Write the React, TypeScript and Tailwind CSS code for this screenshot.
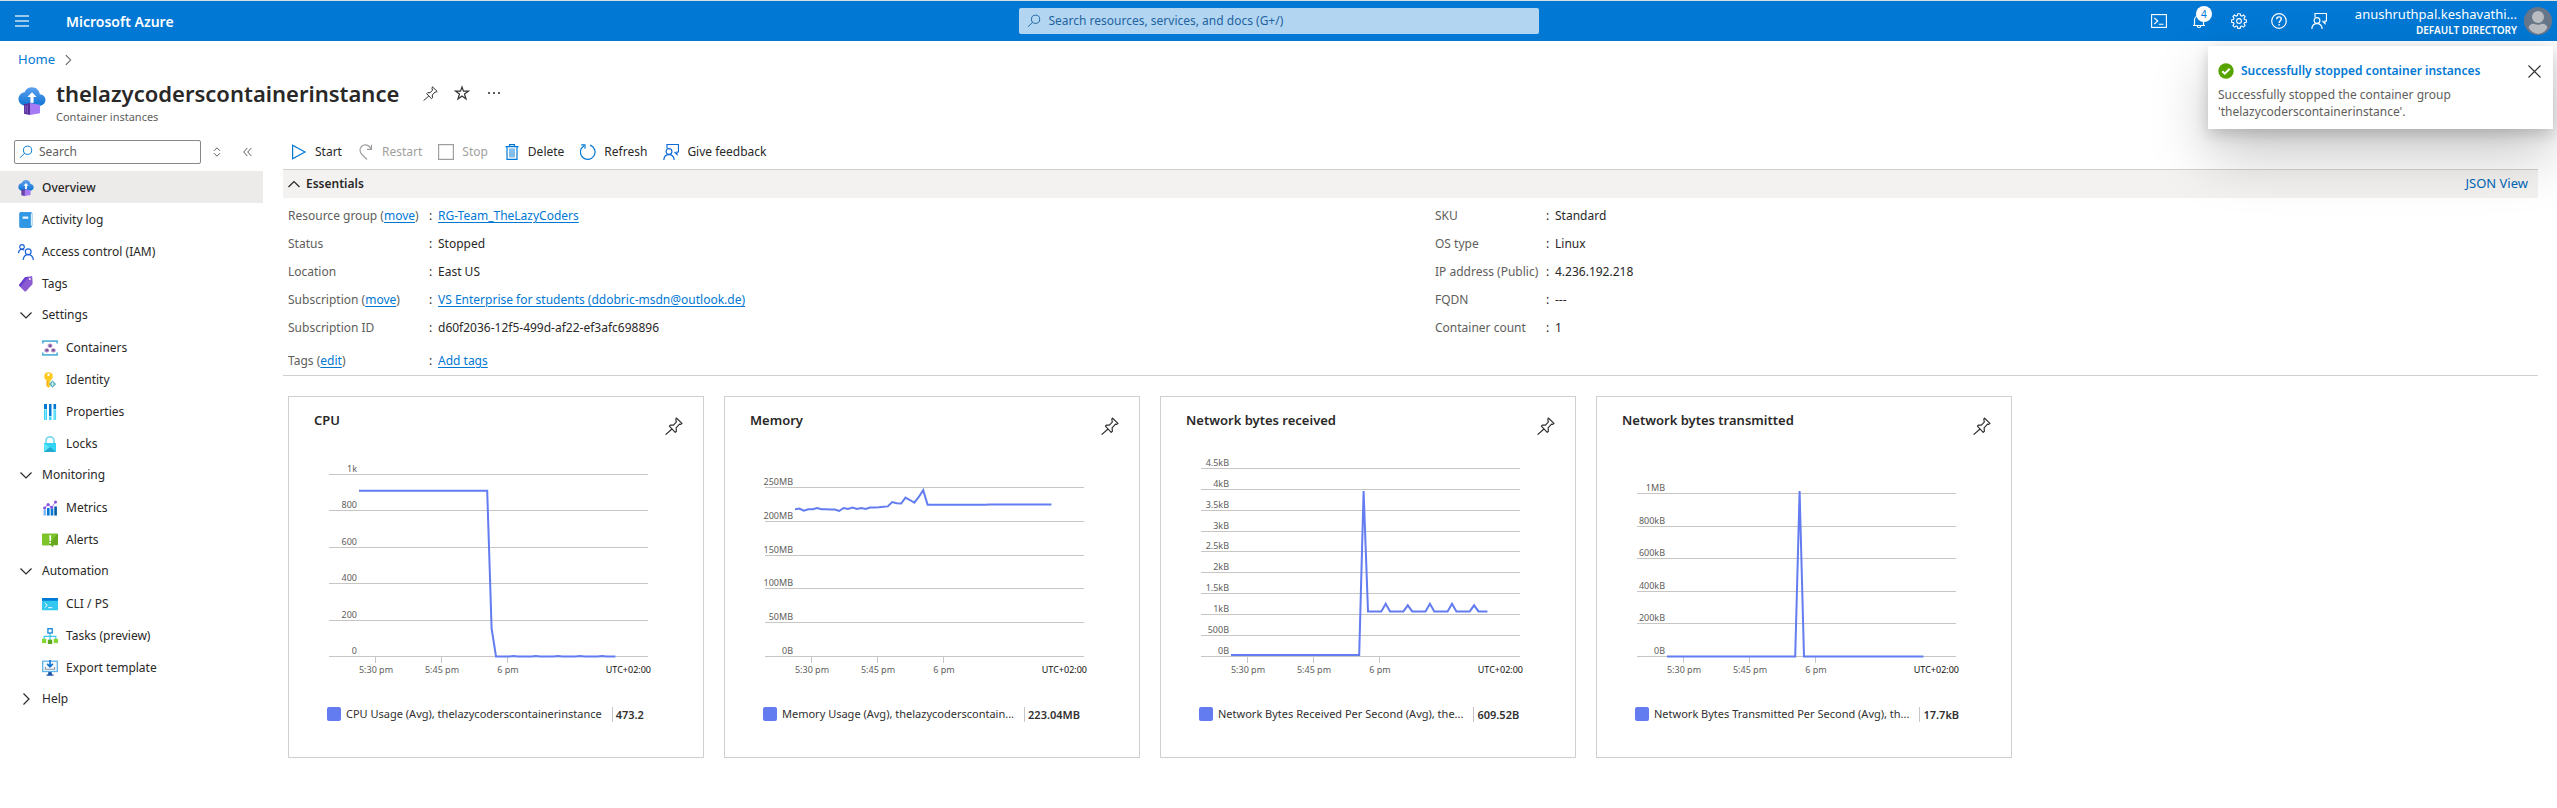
import React from "react";

type IconProps = { className?: string };

/* ---------- line icons ---------- */

function PinIcon({ className = "size-4" }: IconProps) {
  return (
    <svg viewBox="0 0 18 18" className={className} fill="none" stroke="currentColor" strokeWidth="1.2" strokeLinejoin="round">
      <path d="M11.3 1l5.7 5.4-1.3.9-1.2-.1-3.4 3.6.3 3.4-1.2 1.1L4.400 9.200l1.2-1.2 2.900.1 2.900-3.200-.6-2z" />
      <path d="M7 12L.6 17.6" />
    </svg>
  );
}

function StarIcon({ className = "size-4" }: IconProps) {
  return (
    <svg viewBox="0 0 16 16" className={className} fill="none" stroke="currentColor" strokeWidth="1.2" strokeLinejoin="miter">
      <path d="M8 2l1.500 4.200h4.900L10.500 9l1.500 5L8 11.100 4 14l1.500-5L1.600 6.200h4.900z" />
    </svg>
  );
}

function SearchIcon({ className = "size-4" }: IconProps) {
  return (
    <svg viewBox="0 0 16 16" className={className} fill="none" stroke="currentColor" strokeWidth="1.1">
      <circle cx="9.8" cy="6" r="4.700" />
      <path d="M6.4 9.4L1.2 14.6" />
    </svg>
  );
}

function FeedbackIcon({ className = "size-4" }: IconProps) {
  return (
    <svg viewBox="0 0 16 16" className={className} fill="none" stroke="currentColor" strokeWidth="1.2">
      <path d="M4 4.5v-4h11.5v7.500h-1.500v2.500L11.500 8" />
      <circle cx="6" cy="7.500" r="2.900" />
      <path d="M.8 16c.2-3.400 2.200-5.400 5.200-5.400s4.900 2 5.200 5.400" />
    </svg>
  );
}

function Chevron({ dir, className = "size-4" }: IconProps & { dir: "up" | "down" | "right" }) {
  const d = dir === "up" ? "M2.500 11L8 5.500l5.500 5.500" : dir === "down" ? "M2.500 5.500L8 11l5.500-5.500" : "M5.500 2.500L11 8l-5.500 5.500";
  return (
    <svg viewBox="0 0 16 16" className={className} fill="none" stroke="currentColor" strokeWidth="1.2">
      <path d={d} />
    </svg>
  );
}

/* ---------- coloured icons ---------- */

function ContainerInstanceIcon({ className = "size-4" }: IconProps) {
  const id = React.useId();
  return (
    <svg viewBox="0 0 28 28" className={className}>
      <defs>
        <linearGradient id={id} x1="0" y1="0" x2="0" y2="1">
          <stop offset="0" stopColor="#5ea0ef" />
          <stop offset="1" stopColor="#0f75d4" />
        </linearGradient>
      </defs>
      <path d="M27.500 12.700c-.1-3-2.500-5.200-5.700-5.500C21.300 3 18 .2 14 .2c-3.400 0-6.200 1.800-7.400 5C3.200 5.600.5 8.300.5 12.100c0 3.900 3.200 6.700 7 6.700h13.700c3.500 0 6.300-2.700 6.300-6.100z" fill={`url(#${id})`} />
      <path d="M14 5.200l4.600 4.900h-3v5.700h-3.200v-5.700h-3z" fill="#fff" />
      <path d="M6 17.200l6-1.200v12L6 26.800z" fill="#552f99" />
      <path d="M12 16l10 1.800v8.400L12 28z" fill="#a67af4" />
      <path d="M7.300 18.400v7.400M9.300 18v8.200" stroke="#8661c5" strokeWidth="1" />
    </svg>
  );
}

function ActivityLogIcon() {
  return (
    <svg viewBox="0 0 16 16" className="size-4">
      <path d="M2 .3h10.500L14.300 1v12.800l-1.400 1.900H2.600a1 1 0 01-1-1V1.300z" fill="#1b7fd0" />
      <path d="M3.200 1.400h10.900v12.300H2.600z" fill="#d5ecfa" />
      <path d="M2.600.4H12a.8.8 0 01.8.8v14.400H2.600a1.200 1.200 0 01-1.200-1.200V1.600A1.200 1.200 0 012.600.4z" fill="#2f97e4" />
      <rect x="4.500" y="4.600" width="5.800" height="2.200" rx=".4" fill="#e9f6ff" />
    </svg>
  );
}

function AccessIcon() {
  return (
    <svg viewBox="0 0 16 16" className="size-4" fill="none" stroke="#1d63d8" strokeWidth="1.200">
      <circle cx="4" cy="2.900" r="2.300" />
      <path d="M.5 9.200c.2-2.500 1.500-3.900 3.500-3.900.9 0 1.700.3 2.300.8" />
      <circle cx="10.200" cy="7.800" r="2.900" />
      <path d="M5.200 16c.3-3.300 2.200-5.300 5-5.300s4.800 2 5.200 5.300" />
    </svg>
  );
}

function TagIcon() {
  return (
    <svg viewBox="0 0 16 16" className="size-4">
      <path d="M7 1.200L13.300.3c.6-.1 1 .3 1 .9l.3 6.100c0 .5-.1.800-.4 1.100L8 15.200c-.5.5-1.100.5-1.600 0L1.300 10c-.5-.5-.4-1 0-1.500z" fill="#8a5bd0" />
      <path d="M7 1.200L10.500.7 2.700 10.900 1.300 9.600c-.4-.4-.4-.800 0-1.200z" fill="#6b3fd0" />
      <circle cx="11.900" cy="3" r="1" fill="#f2eafc" />
    </svg>
  );
}

function ContainersIcon() {
  return (
    <svg viewBox="0 0 16 16" className="size-4">
      <path d="M0 .2h16v3.200h-1.700V2H1.700v1.400H0zM0 15.800h16v-3.200h-1.700V14H1.700v-1.400H0z" fill="#59b4d9" />
      <path d="M8 3.300l2.300 1.200v2.400L8 8.100 5.700 6.900V4.500zM4.700 8L7 9.200v2.400l-2.300 1.200-2.300-1.200V9.200zM11.300 8l2.300 1.200v2.400l-2.300 1.200L9 11.600V9.200z" fill="#b79bcb" />
      <circle cx="8.200" cy="5.700" r="1.300" fill="#804998" />
      <circle cx="4.900" cy="10.300" r="1.300" fill="#804998" />
      <circle cx="11.500" cy="10.300" r="1.300" fill="#804998" />
    </svg>
  );
}

function IdentityIcon() {
  return (
    <svg viewBox="0 0 16 16" className="size-4">
      <path d="M6.500.2a4.300 4.300 0 00-4.300 4.200c0 1.700.9 3 2.300 3.800v6l2 1.600 2-1.600-1-1.200 1-1.100-1-1.300 1-1V8.200c1.400-.8 2.300-2.100 2.300-3.800A4.300 4.300 0 006.500.2z" fill="#ffca1f" />
      <circle cx="6.500" cy="2.800" r="1.200" fill="#fff" />
      <path d="M5.200 8.600v5.300" stroke="#f09a1a" strokeWidth=".8" />
      <path d="M10.500 8.400L14.200 12l-3.700 3.800L6.900 12z" fill="#5cb4c4" />
      <path d="M10.500 10v4M8.800 12h3.500" stroke="#e6f7fa" strokeWidth=".8" />
    </svg>
  );
}

function PropertiesIcon() {
  return (
    <svg viewBox="0 0 16 16" className="size-4">
      <path d="M2 0h3v5H2zM7 0h2.500v12H7zM11.500 0h2.600v5h-2.600z" fill="#0078d4" />
      <path d="M2 5.500h3V16H2zM7 12.500h2.500V16H7zM11.500 5.500h2.600V16h-2.600z" fill="#32d4f5" />
      <path d="M3 5.500h.9V16H3zM12.400 5.500h.9V16h-.9z" fill="#9cebff" />
    </svg>
  );
}

function LockIcon() {
  return (
    <svg viewBox="0 0 16 16" className="size-4">
      <path d="M4 8V4.800a4 4 0 018 0V8" fill="none" stroke="#7edcf2" strokeWidth="1.800" />
      <path d="M2 7h12v8a1 1 0 01-1 1H3a1 1 0 01-1-1z" fill="#32d4f5" />
      <path d="M2 7l6 4.600L14 7v0L8 11.600 2.300 15.900z" fill="#5ee5fb" />
      <path d="M8 11l5.700 4.700a1 1 0 01-.7.300H3a1 1 0 01-.7-.3z" fill="#22a9cf" />
    </svg>
  );
}

function MetricsIcon() {
  return (
    <svg viewBox="0 0 16 16" className="size-4">
      <rect x="1.500" y="9.500" width="2.600" height="6" fill="#83b9f9" />
      <rect x="5" y="8" width="2.600" height="7.500" fill="#0078d4" />
      <rect x="8.700" y="8.500" width="2.600" height="7" fill="#0078d4" />
      <rect x="12.300" y="6.500" width="2.600" height="9" fill="#005ba1" />
      <path d="M2.600 8L6 4.500l3.700 3L13.600 2" fill="none" stroke="#b796f9" strokeWidth="1.100" />
      <g fill="#8a4fe0">
        <circle cx="2.600" cy="7.900" r="1.500" />
        <circle cx="6.100" cy="4.500" r="1.500" />
        <circle cx="9.700" cy="7.300" r="1.500" />
        <circle cx="13.500" cy="1.900" r="1.500" />
      </g>
    </svg>
  );
}

function AlertsIcon() {
  return (
    <svg viewBox="0 0 16 16" className="size-4">
      <path d="M.6 1.800h14.800a.6.6 0 01.6.6v10.200a.6.6 0 01-.6.600h-4.200v2.300L8.600 13.200H.6a.6.6 0 01-.6-.6V2.400a.6.6 0 01.6-.6z" fill="#68a91f" />
      <path d="M0 2.400a.6.6 0 01.6-.6h14.800l-9 11.400H.6a.6.6 0 01-.6-.6z" fill="#7cc42a" />
      <path d="M7.300 3.300h1.800L8.900 9H7.500zM7.300 10h1.800v1.500H7.300z" fill="#fff" />
    </svg>
  );
}

function CliIcon() {
  return (
    <svg viewBox="0 0 16 16" className="size-4">
      <rect y="2" width="16" height="12.200" rx=".6" fill="#32c8f0" />
      <path d="M0 4.800V2.600A.6.600 0 01.6 2h14.800a.6.600 0 01.6.600v2.200z" fill="#0078d4" />
      <path d="M2.700 7l2.600 2.300-2.600 2.300M6.300 11.700h4" fill="none" stroke="#fff" strokeWidth="1" />
    </svg>
  );
}

function TasksIcon() {
  return (
    <svg viewBox="0 0 16 16" className="size-4">
      <path d="M8 5.200V12M2.200 12V8.300h11.600V12" fill="none" stroke="#3cc6ea" strokeWidth="1.200" />
      <rect x="5.900" y=".7" width="4.300" height="4.300" fill="#fff" stroke="#1586dc" strokeWidth="1.300" />
      <rect y="10.800" width="4.300" height="4.300" fill="#86d633" />
      <rect x="5.900" y="11.700" width="4.300" height="4.300" fill="#5ea624" />
      <rect x="11.700" y="10.800" width="4.300" height="4.300" fill="#86d633" />
    </svg>
  );
}

function ExportIcon() {
  return (
    <svg viewBox="0 0 16 16" className="size-4">
      <rect x=".7" y="1.200" width="14.600" height="10.300" fill="#f2faff" stroke="#5fb3ea" strokeWidth="1.300" />
      <path d="M8 0v6M5.200 3.900L8 6.900l2.800-3" fill="none" stroke="#1271cc" strokeWidth="1.600" />
      <path d="M3.400 7v2.300h9.200V7" fill="none" stroke="#8a97a3" strokeWidth="1.100" />
      <path d="M6.500 12h3l.6 2.600h1.400v1.200H4.500v-1.200h1.400z" fill="#1d55a8" />
    </svg>
  );
}

/* ---------- header ---------- */

const headerButton = "relative flex size-10 items-center justify-center";

function Header() {
  return (
    <header className="flex h-[41px] items-center border-t border-[#dcdfe0] bg-[#0078d4] text-white">
      <div className="flex flex-1 items-center">
        <button aria-label="Show portal menu" className="ml-[15px] flex w-[14px] flex-col gap-[3px] opacity-60">
          <span className="h-[2px] w-full bg-white" />
          <span className="h-[2px] w-full bg-white" />
          <span className="h-[2px] w-full bg-white" />
        </button>
        <a href="#" className="ml-[37px] text-[14px] font-semibold">Microsoft Azure</a>
      </div>
      <label className="flex h-[26px] w-[520px] items-center rounded-[2px] bg-[#b2d6f2] pl-2 text-[#1f639f]">
        <SearchIcon className="size-[14px]" />
        <input
          aria-label="Search resources, services, and docs"
          placeholder="Search resources, services, and docs (G+/)"
          className="ml-2 min-w-0 flex-1 bg-transparent text-[12px] outline-none placeholder:text-[#1f639f]"
        />
      </label>
      <div className="flex flex-1 items-center justify-end">
        <button aria-label="Cloud Shell" className={headerButton}>
          <svg viewBox="0 0 16 16" className="size-4" fill="none" stroke="currentColor" strokeWidth="1.100">
            <rect x=".6" y="1.600" width="14.800" height="12.800" />
            <path d="M3.300 5l3.500 3-3.500 3M7.800 11.300h4.700" />
          </svg>
        </button>
        <button aria-label="Notifications" className={headerButton}>
          <svg viewBox="0 0 16 16" className="size-4" fill="none" stroke="currentColor" strokeWidth="1.200">
            <path d="M2 12.500h12M3.500 12.500V7a4.500 4.500 0 019 0v5.500M6.200 12.700a1.800 1.800 0 003.600 0" />
          </svg>
          <span className="absolute left-[17px] top-[5px] flex size-4 items-center justify-center rounded-full bg-white text-[10px] leading-none text-[#0078d4]">4</span>
        </button>
        <button aria-label="Settings" className={headerButton}>
          <svg viewBox="0 0 16 16" className="size-4" fill="none" stroke="currentColor" strokeWidth="1.100">
            <circle cx="8" cy="8" r="2.400" />
            <path d="M6.800.7h2.400l.4 1.900 1.200.5 1.700-1.100 1.600 1.600L13 5.300l.5 1.200 1.900.4v2.300l-1.900.4-.5 1.200 1.100 1.600-1.600 1.700-1.700-1.100-1.200.5-.4 1.900H6.800l-.4-1.900-1.200-.5-1.700 1.100-1.600-1.700L3 10.800l-.5-1.200-1.900-.4V6.900l1.900-.4L3 5.300 1.900 3.600 3.500 2l1.700 1.100 1.200-.5z" />
          </svg>
        </button>
        <button aria-label="Help" className={headerButton}>
          <svg viewBox="0 0 16 16" className="size-4" fill="none" stroke="currentColor" strokeWidth="1.200">
            <circle cx="8" cy="8" r="7.300" />
            <path d="M5.700 6.300c0-1.500 1-2.400 2.300-2.400s2.300.9 2.300 2.100c0 1.600-2.200 1.900-2.200 4M8.100 11v1.400" strokeWidth="1.400" />
          </svg>
        </button>
        <button aria-label="Feedback" className={headerButton}>
          <FeedbackIcon />
        </button>
        <button className="ml-4 mr-[5px] flex items-center gap-[7px] text-right">
          <span className="flex flex-col">
            <span className="text-[13px] leading-[18px]">anushruthpal.keshavathi...</span>
            <span className="text-[10px] font-semibold leading-[14px]">DEFAULT DIRECTORY</span>
          </span>
          <svg viewBox="0 0 28 28" className="size-7">
            <circle cx="14" cy="14" r="14" fill="#68768a" />
            <circle cx="14" cy="10" r="6" fill="#b9bcc0" />
            <path d="M4.500 20.500c1-3 3-4 5.500-3.800 2.500 1.300 5.500 1.300 8 0 2.500-.2 4.500.8 5.500 3.800A12.600 12.600 0 0114 27a12.600 12.600 0 01-9.500-6.500z" fill="#b9bcc0" />
          </svg>
        </button>
      </div>
    </header>
  );
}

function Toast() {
  return (
    <div role="status" className="absolute right-1 top-[46px] h-[83px] w-[345px] bg-white px-[10px] pt-4 shadow-[0_26px_58px_0_rgba(0,0,0,0.22),0_5px_14px_0_rgba(0,0,0,0.18)]">
      <div className="flex h-[18px] items-center">
        <svg viewBox="0 0 16 16" className="size-4">
          <circle cx="8" cy="8" r="7.700" fill="#57a300" />
          <path d="M4.300 8.200l2.500 2.500 4.900-5" fill="none" stroke="#fff" strokeWidth="2" />
        </svg>
        <a href="#" className="ml-[7px] text-[12px] font-semibold leading-[18px] text-[#0078d4]">Successfully stopped container instances</a>
        <button aria-label="Dismiss" className="ml-auto mr-[2px]">
          <svg viewBox="0 0 13 13" className="size-[13px]" stroke="#323130" strokeWidth="1.100">
            <path d="M.5.5l12 12M12.500.5l-12 12" />
          </svg>
        </button>
      </div>
      <p className="mt-[6px] text-[12px] leading-[17px] text-[#605e5c]">
        Successfully stopped the container group
        <br />
        'thelazycoderscontainerinstance'.
      </p>
    </div>
  );
}

/* ---------- sidebar ---------- */

type NavEntry = { label: string; icon?: React.ReactNode; kind: "item" | "child" | "open" | "closed"; active?: boolean };

const nav: NavEntry[] = [
  { label: "Overview", kind: "item", icon: <ContainerInstanceIcon />, active: true },
  { label: "Activity log", kind: "item", icon: <ActivityLogIcon /> },
  { label: "Access control (IAM)", kind: "item", icon: <AccessIcon /> },
  { label: "Tags", kind: "item", icon: <TagIcon /> },
  { label: "Settings", kind: "open" },
  { label: "Containers", kind: "child", icon: <ContainersIcon /> },
  { label: "Identity", kind: "child", icon: <IdentityIcon /> },
  { label: "Properties", kind: "child", icon: <PropertiesIcon /> },
  { label: "Locks", kind: "child", icon: <LockIcon /> },
  { label: "Monitoring", kind: "open" },
  { label: "Metrics", kind: "child", icon: <MetricsIcon /> },
  { label: "Alerts", kind: "child", icon: <AlertsIcon /> },
  { label: "Automation", kind: "open" },
  { label: "CLI / PS", kind: "child", icon: <CliIcon /> },
  { label: "Tasks (preview)", kind: "child", icon: <TasksIcon /> },
  { label: "Export template", kind: "child", icon: <ExportIcon /> },
  { label: "Help", kind: "closed" },
];

function NavRow({ entry }: { entry: NavEntry }) {
  if (entry.kind === "open" || entry.kind === "closed") {
    return (
      <button aria-expanded={entry.kind === "open"} className="flex h-8 w-full items-center gap-2 pl-[18px] text-left">
        <Chevron dir={entry.kind === "open" ? "down" : "right"} />
        {entry.label}
      </button>
    );
  }
  return (
    <a href="#" className={`flex h-8 items-center gap-2 pt-[2px] ${entry.kind === "child" ? "pl-[42px]" : "pl-[18px]"} ${entry.active ? "bg-[#edebe9] font-medium" : ""}`}>
      {entry.icon}
      {entry.label}
    </a>
  );
}

function Sidebar() {
  return (
    <aside className="w-[263px] shrink-0">
      <div className="flex h-6 items-center pl-[14px]">
        <label className="flex h-6 w-[187px] items-center rounded-[2px] border border-[#8a8886] pl-[4px] text-[#0078d4]">
          <SearchIcon className="size-[14px]" />
          <input aria-label="Search" placeholder="Search" className="ml-[6px] min-w-0 flex-1 bg-transparent text-[12px] outline-none placeholder:text-[#605e5c]" />
        </label>
        <button aria-label="Expand or collapse all" className="ml-[12px] text-[#605e5c]">
          <svg viewBox="0 0 8 10" className="h-[10px] w-2" fill="none" stroke="currentColor">
            <path d="M1 3.800l3-3 3 3M1 6.200l3 3 3-3" />
          </svg>
        </button>
        <button aria-label="Hide menu" className="ml-[22px] text-[#605e5c]">
          <svg viewBox="0 0 9 10" className="h-[10px] w-[9px]" fill="none" stroke="currentColor">
            <path d="M4.300 1l-3.600 4 3.600 4M8.300 1L4.700 5l3.600 4" />
          </svg>
        </button>
      </div>
      <nav className="mt-[7px] text-[12px] text-[#292827]">
        {nav.map((entry) => (
          <NavRow key={entry.label} entry={entry} />
        ))}
      </nav>
    </aside>
  );
}

/* ---------- command bar ---------- */

const commands: { label: string; icon: React.ReactNode; disabled?: boolean }[] = [
  {
    label: "Start",
    icon: (
      <svg viewBox="0 0 16 16" className="size-4" fill="none" stroke="#0078d4" strokeWidth="1.200">
        <path d="M1.600 1.200v13.600L14 8z" />
      </svg>
    ),
  },
  {
    label: "Restart",
    disabled: true,
    icon: (
      <svg viewBox="0 0 16 16" className="size-4" fill="none" stroke="currentColor" strokeWidth="1.200">
        <path d="M13.500.8v4.500H9M13 4.800C11.500 2 9.300.9 7.200.9 4.300.9 2 3.300 2 6.200c0 2 1 3.300 2 4.300l5 5" />
      </svg>
    ),
  },
  {
    label: "Stop",
    disabled: true,
    icon: (
      <svg viewBox="0 0 16 16" className="size-4" fill="none" stroke="currentColor" strokeWidth="1.200">
        <path d="M.6.600h14.800v14.800H.6z" />
      </svg>
    ),
  },
  {
    label: "Delete",
    icon: (
      <svg viewBox="0 0 16 16" className="size-4" fill="none" stroke="#0078d4" strokeWidth="1.200">
        <path d="M5 4.500h6v9H5z" fill="#83bdec" stroke="none" />
        <path d="M1.500 2.600h13M5.500 2.500V.7h5v1.800M3 2.600v12.800h10V2.600" />
      </svg>
    ),
  },
  {
    label: "Refresh",
    icon: (
      <svg viewBox="0 0 16 16" className="size-4" fill="none" stroke="#0078d4" strokeWidth="1.200">
        <path d="M10 1.100a7.300 7.300 0 11-6.200.8M1.200.8H5v4" />
      </svg>
    ),
  },
  { label: "Give feedback", icon: <FeedbackIcon className="size-4 text-[#0f6cd6]" /> },
];

function CommandBar() {
  return (
    <div className="flex h-[29px] items-start gap-4 pl-2 text-[12px] text-[#292827]">
      {commands.map((c) => (
        <button key={c.label} disabled={c.disabled} className="flex h-6 items-center gap-2 disabled:text-[#a19f9d]">
          {c.icon}
          {c.label}
        </button>
      ))}
    </div>
  );
}

/* ---------- essentials ---------- */

type Fact = { label: string; action?: string; value: string; link?: boolean };

const leftFacts: Fact[] = [
  { label: "Resource group", action: "move", value: "RG-Team_TheLazyCoders", link: true },
  { label: "Status", value: "Stopped" },
  { label: "Location", value: "East US" },
  { label: "Subscription", action: "move", value: "VS Enterprise for students (ddobric-msdn@outlook.de)", link: true },
  { label: "Subscription ID", value: "d60f2036-12f5-499d-af22-ef3afc698896" },
];

const rightFacts: Fact[] = [
  { label: "SKU", value: "Standard" },
  { label: "OS type", value: "Linux" },
  { label: "IP address (Public)", value: "4.236.192.218" },
  { label: "FQDN", value: "---" },
  { label: "Container count", value: "1" },
];

const linkClass = "text-[#0078d4] underline underline-offset-2";

function FactRow({ fact, labelWidth }: { fact: Fact; labelWidth: string }) {
  return (
    <div className="flex h-7 items-center">
      <dt className={`${labelWidth} shrink-0 text-[#605e5c]`}>
        {fact.label}
        {fact.action && (
          <>
            {" ("}
            <a href="#" className={linkClass}>{fact.action}</a>)
          </>
        )}
      </dt>
      <dd className="flex text-[#292827]">
        <span className="w-[9px]">:</span>
        {fact.link ? <a href="#" className={linkClass}>{fact.value}</a> : fact.value}
      </dd>
    </div>
  );
}

function Essentials() {
  return (
    <section className="border-b border-[#d2d0ce] text-[12px]">
      <div className="flex h-[29px] items-center justify-between border-t border-[#d2d0ce] bg-[#f3f2f1] pl-[3px] pr-[10px]">
        <button aria-expanded="true" className="flex items-center gap-1 font-semibold text-[#292827]">
          <Chevron dir="up" />
          Essentials
        </button>
        <a href="#" className="text-[13px] text-[#0067b8]">JSON View</a>
      </div>
      <div className="grid grid-cols-2 gap-x-11 pl-[5px] pt-1">
        <dl>
          {leftFacts.map((f) => (
            <FactRow key={f.label} fact={f} labelWidth="w-[141px]" />
          ))}
        </dl>
        <dl>
          {rightFacts.map((f) => (
            <FactRow key={f.label} fact={f} labelWidth="w-[111px]" />
          ))}
        </dl>
      </div>
      <dl className="pl-[5px] pt-[5px]">
        <FactRow fact={{ label: "Tags", action: "edit", value: "Add tags", link: true }} labelWidth="w-[141px]" />
      </dl>
    </section>
  );
}

/* ---------- charts ---------- */

type ChartSpec = {
  title: string;
  legend: string;
  total: string;
  ticks: string[];
  step: number;
  pxPerStep: number;
  values: number[];
};

const SAMPLES = 59;
const fill = (fn: (i: number) => number) => Array.from({ length: SAMPLES }, (_, i) => fn(i));

const memoryStart = [
  217.7, 219, 215.7, 217.7, 217.7, 219.7, 217.7, 217.9, 217.5, 217.4, 215.2, 219.7, 218.2, 220.2, 218.2, 219.7, 218.2, 220.2, 220.2,
  220.7, 221.6, 222, 228.6, 226.6, 226.4, 235, 231.5, 227.6, 236, 246,
];

const charts: ChartSpec[] = [
  {
    title: "CPU",
    legend: "CPU Usage (Avg), thelazycoderscontainerinstance",
    total: "473.2",
    ticks: ["0", "200", "400", "600", "800", "1k"],
    step: 200,
    pxPerStep: 36.4,
    values: fill((i) => (i < 30 ? 911 : i === 30 ? 155 : i % 5 === 0 ? 3 : 0)),
  },
  {
    title: "Memory",
    legend: "Memory Usage (Avg), thelazycoderscontain...",
    total: "223.04MB",
    ticks: ["0B", "50MB", "100MB", "150MB", "200MB", "250MB"],
    step: 50,
    pxPerStep: 33.8,
    values: fill((i) => (i < 30 ? memoryStart[i] : i < 44 ? 224.5 : 225)),
  },
  {
    title: "Network bytes received",
    legend: "Network Bytes Received Per Second (Avg), the...",
    total: "609.52B",
    ticks: ["0B", "500B", "1kB", "1.5kB", "2kB", "2.5kB", "3kB", "3.5kB", "4kB", "4.5kB"],
    step: 500,
    pxPerStep: 20.9,
    values: fill((i) => (i < 30 ? 38 : i === 30 ? 3960 : i > 34 && i % 5 === 0 ? (i === 40 || i === 55 ? 1225 : 1260) : 1080)),
  },
  {
    title: "Network bytes transmitted",
    legend: "Network Bytes Transmitted Per Second (Avg), th...",
    total: "17.7kB",
    ticks: ["0B", "200kB", "400kB", "600kB", "800kB", "1MB"],
    step: 200,
    pxPerStep: 32.5,
    values: fill((i) => (i === 30 ? 1018 : 0)),
  },
];

const BASE = 210;

function Chart({ spec }: { spec: ChartSpec }) {
  const points = spec.values
    .map((v, i) => `${(45 + i * 4.42).toFixed(1)},${(BASE + 0.5 - (v / spec.step) * spec.pxPerStep).toFixed(1)}`)
    .join(" ");
  return (
    <svg viewBox="0 0 364 240" className="w-full" role="img" aria-label={spec.title}>
      <g stroke="#c8c6c4" shapeRendering="crispEdges">
        {spec.ticks.map((t, i) => {
          const y = BASE - Math.round(i * spec.pxPerStep) + 0.5;
          return <line key={t} x1="15" x2="334" y1={y} y2={y} />;
        })}
        {[61.5, 127.5, 193.5].map((x) => (
          <line key={x} x1={x} x2={x} y1="211" y2="217" />
        ))}
      </g>
      <g className="text-[9px]" fill="#605e5c" textAnchor="end">
        {spec.ticks.map((t, i) => (
          <text key={t} x="43" y={BASE - Math.round(i * spec.pxPerStep) - 2}>{t}</text>
        ))}
      </g>
      <g className="text-[9px]" fill="#605e5c" textAnchor="middle">
        <text x="62" y="227">5:30 pm</text>
        <text x="128" y="227">5:45 pm</text>
        <text x="194" y="227">6 pm</text>
      </g>
      <text x="337" y="227" textAnchor="end" fill="#111" className="text-[9px]">UTC+02:00</text>
      <polyline points={points} fill="none" stroke="#637cef" strokeWidth="2" />
    </svg>
  );
}

function ChartCard({ spec }: { spec: ChartSpec }) {
  return (
    <article className="w-[416px] max-w-full border border-[#d2d0ce] bg-white px-[25px] pb-[34px]">
      <div className="flex h-[49px] justify-between">
        <h2 className="pt-[13px] text-[13px] font-semibold leading-5 text-[#292827]">{spec.title}</h2>
        <button aria-label={`Pin ${spec.title} to dashboard`} className="mr-[-5px] mt-[20px] size-[18px] text-[#323130]">
          <PinIcon className="size-[18px]" />
        </button>
      </div>
      <Chart spec={spec} />
      <div className="ml-[13px] mt-[19px] flex h-[18px] items-center whitespace-nowrap text-[11px] text-[#323130]">
        <span className="size-[14px] shrink-0 rounded-[2px] bg-[#637cef]" />
        <span className="ml-[5px]">{spec.legend}</span>
        <span className="ml-[10px] border-l border-[#c8c6c4] pl-[3px] font-semibold leading-[15px]">{spec.total}</span>
      </div>
    </article>
  );
}

/* ---------- page ---------- */

export default function App() {
  return (
    <div className="relative min-h-screen bg-white font-['Noto_Sans','Open_Sans',sans-serif] text-[#292827]">
      <Header />
      <nav aria-label="Breadcrumb" className="flex h-[37px] items-center gap-[6px] pl-[18px] text-[13px]">
        <a href="#" className="text-[#0078d4]">Home</a>
        <Chevron dir="right" className="size-[14px] text-[#605e5c]" />
      </nav>
      <div className="flex h-[62px] pl-[18px]">
        <ContainerInstanceIcon className="mt-[9px] size-7" />
        <div className="ml-[10px]">
          <div className="flex h-[30px] items-center">
            <h1 className="text-[22px] font-semibold leading-[28px]">thelazycoderscontainerinstance</h1>
            <div className="ml-6 flex items-center gap-4 text-[#323130]">
              <button aria-label="Pin to dashboard"><PinIcon className="size-[15px]" /></button>
              <button aria-label="Favorite"><StarIcon /></button>
              <button aria-label="More" className="ml-[2px] flex gap-[3px]">
                <span className="size-[2px] bg-[#605e5c]" />
                <span className="size-[2px] bg-[#605e5c]" />
                <span className="size-[2px] bg-[#605e5c]" />
              </button>
            </div>
          </div>
          <p className="mt-[1px] text-[11px] leading-4 text-[#605e5c]">Container instances</p>
        </div>
      </div>
      <div className="flex gap-5">
        <Sidebar />
        <main className="mr-[19px] min-w-0 flex-1">
          <CommandBar />
          <Essentials />
          <div className="flex flex-wrap gap-5 pb-5 pl-[5px] pt-5">
            {charts.map((spec) => (
              <ChartCard key={spec.title} spec={spec} />
            ))}
          </div>
        </main>
      </div>
      <Toast />
    </div>
  );
}
